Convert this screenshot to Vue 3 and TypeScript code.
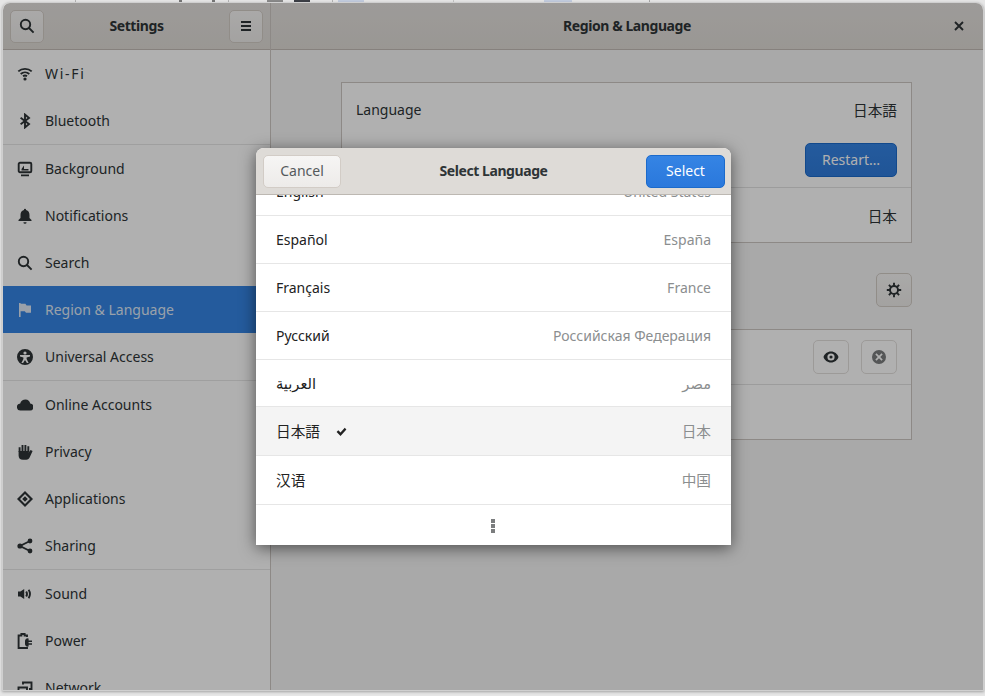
<script setup lang="ts">
interface NavItem {
  label: string;
  fill?: string;
  stroke?: string;
  sep?: boolean;
  active?: boolean;
}

interface LangRow {
  name: string;
  region: string;
  cls?: string;
  current?: boolean;
}

const navItems: NavItem[] = [
  {
    label: "Wi-Fi",
    fill: "M8 11.4a1.6 1.6 0 1 1 0 3.2 1.6 1.6 0 0 1 0-3.2z",
    stroke: "M1.3 5.4C5 2 11 2 14.7 5.4M3.7 7.9C6.2 5.8 9.8 5.8 12.3 7.9M6 10.2C7.2 9.4 8.8 9.4 10 10.2",
  },
  { label: "Bluetooth", stroke: "M3.6 4.8L12 11 8 14.4V1.6L12 5 3.6 11.2" },
  {
    label: "Background",
    sep: true,
    fill: "M4.5 8h7v1.500h-7zM4.500 8l2.500-3.500V8z",
    stroke: "M3 1.700h10a1.300 1.300 0 0 1 1.300 1.300v7a1.300 1.300 0 0 1-1.300 1.300H3A1.300 1.300 0 0 1 1.700 10V3A1.300 1.300 0 0 1 3 1.700zM4 14.400h8",
  },
  {
    label: "Notifications",
    fill: "M8 .8a1.1 1.1 0 0 1 1.1 1.1c2.4.5 3.4 2.5 3.4 5v3l2 2.2v.9h-13v-.9l2-2.2v-3c0-2.5 1-4.5 3.4-5A1.1 1.1 0 0 1 8 .8zM6.4 14.2h3.2a1.6 1.6 0 0 1-3.2 0z",
  },
  { label: "Search", stroke: "M11.2 6.5a4.7 4.7 0 1 1-9.4 0 4.7 4.7 0 0 1 9.4 0zM10 10l4.6 4.6" },
  {
    label: "Region & Language",
    active: true,
    fill: "M2 1h1.6v14H2zM3.6 1.8h4.8l1.2 1.6H14v7.4H9l-1.2-1.5H3.6z",
  },
  {
    label: "Universal Access",
    fill: "M8 0a8 8 0 1 0 0 16A8 8 0 0 0 8 0zM8 2.4a1.6 1.6 0 1 1 0 3.2 1.6 1.6 0 0 1 0-3.2zM3 6h10v1.5l-3.4 1V10l2 4H9.9L8 11l-1.9 3H4.4l2-4V8.5L3 7.5z",
  },
  {
    label: "Online Accounts",
    sep: true,
    fill: "M3.6 13.5a3.5 3.5 0 0 1-.4-7C3.8 4 6 2.5 8.5 2.5c2.6 0 4.4 1.8 4.7 4a3.5 3.5 0 0 1-.6 7z",
  },
  {
    label: "Privacy",
    fill: "M1.600 7h10v1.500L13.600 6l2 1-2.600 5.800c-.8 1.800-2 2.900-3.800 2.900H6c-2.800 0-4.400-1.700-4.400-4.300z",
    stroke: "M2.600 8V3.200M5.500 8V.9M8.400 8V.9M11.300 8V2.200",
  },
  {
    label: "Applications",
    fill: "M8 0l8 8-8 8-8-8zM8 3L3 8l5 5 5-5zM8 5.2L10.8 8 8 10.8 5.2 8z",
  },
  {
    label: "Sharing",
    fill: "M3 5.4a2.6 2.6 0 1 1 0 5.2 2.6 2.6 0 0 1 0-5.2zM13 .6a2.4 2.4 0 1 1 0 4.8 2.4 2.4 0 0 1 0-4.8zM13 10.6a2.4 2.4 0 1 1 0 4.8 2.4 2.4 0 0 1 0-4.8z",
    stroke: "M13 3L3 8l10 5",
  },
  {
    label: "Sound",
    sep: true,
    fill: "M1 5.5h2.4L7.2 3v10l-3.8-2.5H1z",
    stroke: "M9.2 5.4c1 1.6 1 3.6 0 5.2M11.6 3.8c1.7 2.6 1.7 5.8 0 8.4",
  },
  {
    label: "Power",
    fill: "M8 8a2.6 2.6 0 0 1 3-2.6h.6v2H15v1.5h-3.4v1.3H15v1.5h-3.4v1.9H11A2.6 2.6 0 0 1 8 11z",
    stroke: "M10 3.9V2.5H7.6V1H4.4v1.5H1.6V15H10v-1",
  },
  { label: "Network", stroke: "M1.5 7.5h8.5v6H1.5zM6 4.5V2.5h8.5v6.5H12" },
];

const langRows: LangRow[] = [
  { name: "English", region: "United States", cls: "first" },
  { name: "Español", region: "España" },
  { name: "Français", region: "France" },
  { name: "Русский", region: "Российская Федерация" },
  { name: "العربية", region: "مصر", cls: "short big" },
  { name: "日本語", region: "日本", cls: "tall big picked", current: true },
  { name: "汉语", region: "中国", cls: "tall big" },
];

// bits of the window behind, seen above the top edge
const behind = [
  { x: 75, w: 1, c: "#b4b4b4" },
  { x: 179, w: 3, c: "#777" },
  { x: 212, w: 3, c: "#777" },
  { x: 228, w: 1, c: "#b4b4b4" },
  { x: 267, w: 16, c: "#8a8a8a" },
  { x: 294, w: 16, c: "#3c3f46" },
  { x: 332, w: 1, c: "#b4b4b4" },
  { x: 338, w: 26, c: "#c3cddf" },
  { x: 453, w: 1, c: "#c4c4c4" },
  { x: 544, w: 28, c: "#c3cddf" },
  { x: 649, w: 1, c: "#a8a8a8" },
];
</script>

<template>
  <div class="desktop">
    <span
      v-for="m in behind"
      :key="m.x"
      class="mark"
      :style="{ left: m.x + 'px', width: m.w + 'px', background: m.c }"
    ></span>

    <div class="window">
      <aside class="sidebar">
        <header class="headerbar">
          <button class="btn icon-btn">
            <svg class="ico" viewBox="0 0 16 16"><path class="s" d="M11.2 6.5a4.7 4.7 0 1 1-9.4 0 4.7 4.7 0 0 1 9.4 0zM10 10l4.6 4.6" /></svg>
          </button>
          <span class="title">Settings</span>
          <button class="btn icon-btn">
            <svg class="ico" viewBox="0 0 16 16"><path class="f" d="M3 3h10v2H3zM3 7h10v2H3zM3 11h10v2H3z" /></svg>
          </button>
        </header>
        <nav class="nav">
          <div
            v-for="item in navItems"
            :key="item.label"
            class="nav-row"
            :class="{ sep: item.sep, active: item.active }"
          >
            <svg class="ico" viewBox="0 0 16 16">
              <path v-if="item.fill" class="f" :d="item.fill" />
              <path v-if="item.stroke" class="s" :d="item.stroke" />
            </svg>
            <span :class="{ wide: item.label === 'Wi-Fi' }">{{ item.label }}</span>
          </div>
        </nav>
      </aside>

      <section class="panel">
        <header class="headerbar center">
          <span class="title">Region &amp; Language</span>
          <svg class="close" viewBox="0 0 16 16"><path class="s" d="M4 4l8 8M12 4l-8 8" /></svg>
        </header>
        <div class="content">
          <div class="box">
            <div class="row between">
              <span class="lift">Language</span>
              <span class="cjk lift">日本語</span>
            </div>
            <div class="row-restart">
              <button class="btn restart">Restart…</button>
            </div>
            <div class="row end divided"><span class="cjk">日本</span></div>
          </div>

          <div class="gear-row">
            <button class="btn icon-btn tall-btn">
              <svg class="ico" viewBox="0 0 16 16">
                <path
                  class="s"
                  d="M12 8a4 4 0 1 1-8 0 4 4 0 0 1 8 0zM8 .8v2.7M8 12.5v2.7M.8 8h2.7M12.5 8h2.7M2.9 2.9l1.9 1.9M11.2 11.2l1.9 1.9M2.9 13.1l1.9-1.9M11.2 4.8l1.9-1.9"
                />
              </svg>
            </button>
          </div>

          <div class="box">
            <div class="row end gap">
              <button class="btn flat">
                <svg class="ico" viewBox="0 0 16 16">
                  <path class="f" fill-rule="evenodd" d="M8 2.5c-3.8 0-6.4 2.4-7.5 5.5 1.1 3.1 3.7 5.5 7.5 5.5s6.4-2.4 7.5-5.5C14.400 4.900 11.800 2.500 8 2.500zM8 4.400a3.600 3.600 0 1 1 0 7.200 3.600 3.600 0 0 1 0-7.200zM8 6.400a1.600 1.600 0 1 0 0 3.200 1.600 1.600 0 0 0 0-3.200z" />
                </svg>
              </button>
              <button class="btn flat">
                <svg class="ico grey" viewBox="0 0 16 16">
                  <path class="f" fill-rule="evenodd" d="M8 1a7 7 0 1 0 0 14A7 7 0 0 0 8 1zM5.500 4.300L8 6.800l2.500-2.500 1.200 1.200L9.200 8l2.500 2.500-1.200 1.200L8 9.200l-2.500 2.500-1.200-1.200L6.800 8 4.300 5.500z" />
                </svg>
              </button>
            </div>
            <div class="row divided"></div>
          </div>
        </div>
      </section>

      <div class="scrim"></div>

      <div class="dialog">
        <header class="dlg-head">
          <button class="btn dlg-btn">Cancel</button>
          <span class="title">Select Language</span>
          <button class="btn dlg-btn primary">Select</button>
        </header>
        <div class="lang-list">
          <div v-for="l in langRows" :key="l.name" class="lang-row" :class="l.cls">
            <span class="lang-name">{{ l.name }}</span>
            <svg v-if="l.current" class="check" viewBox="0 0 16 16"><path d="M2 8.500l2-2 2.800 2.800L12 3.500l2 2-7.200 8z" /></svg>
            <span class="lang-region">{{ l.region }}</span>
          </div>
          <div class="more">
            <svg class="ico grey" viewBox="0 0 16 16"><path class="f" d="M6 1h4v4H6zM6 6h4v4H6zM6 11h4v4H6z" /></svg>
          </div>
        </div>
      </div>
    </div>
  </div>
</template>

<style>
html,
body {
  background: #e6e6e6;
}
</style>

<style scoped>
.desktop {
  position: relative;
  width: 985px;
  height: 696px;
  overflow: hidden;
  padding: 2px 1px 0 2px;
  box-sizing: border-box;
  background: #e6e6e6;
  font-family: "Noto Sans", "Noto Sans CJK JP", "DejaVu Sans", sans-serif;
  font-size: 14px;
  color: #2e3436;
}

.mark {
  position: absolute;
  top: 0;
  height: 2px;
}

.window {
  position: relative;
  display: grid;
  grid-template-columns: 268px 1fr;
  height: 689px;
  box-sizing: border-box;
  border: 1px solid #cfcfcf;
  border-radius: 8px 8px 0 0;
  overflow: hidden;
  background: #f5f5f5;
  box-shadow: 0 1px 3px rgba(0, 0, 0, 0.3);
}

.sidebar {
  display: flex;
  flex-direction: column;
  min-height: 0;
  background: #fff;
  border-right: 1px solid #cdc7c2;
}

.panel {
  display: flex;
  flex-direction: column;
  min-width: 0;
}

.headerbar {
  flex: none;
  position: relative;
  display: flex;
  align-items: center;
  justify-content: space-between;
  height: 47px;
  box-sizing: border-box;
  padding: 0 7px;
  background: linear-gradient(#e4e1de, #dfdbd6);
  border-bottom: 1px solid #c3bcb5;
}

.headerbar.center {
  justify-content: center;
}

.title {
  padding-bottom: 2px;
  font-weight: 700;
  letter-spacing: -0.42px;
  color: #2e3436;
}

.close {
  position: absolute;
  right: 16px;
  top: 15px;
  width: 16px;
  height: 16px;
  color: #2e3436;
}

.ico {
  flex: none;
  width: 16px;
  height: 16px;
  color: #2e3436;
}

.ico.grey {
  color: #7b7d7e;
}

.f {
  fill: currentColor;
}

.s {
  fill: none;
  stroke: currentColor;
  stroke-width: 1.9;
}

.btn {
  display: inline-flex;
  align-items: center;
  justify-content: center;
  box-sizing: border-box;
  padding: 0 0 2px;
  font: inherit;
  color: #2e3436;
  border: 1px solid #d2ccc6;
  border-radius: 5px;
  background: linear-gradient(#f6f5f4, #edebe9);
}

.icon-btn {
  width: 34px;
  height: 33px;
  padding: 0;
}

.tall-btn {
  width: 36px;
  height: 34px;
}

.nav {
  flex: 1;
  min-height: 0;
  overflow: hidden;
}

.nav-row {
  display: flex;
  align-items: center;
  gap: 12px;
  height: 47px;
  padding-left: 14px;
  color: #2e3436;
}

.nav-row.sep {
  height: 48px;
  border-top: 1px solid #e6e6e6;
  box-sizing: border-box;
}

.nav-row.active {
  background: #3584e4;
  color: #dfe9f6;
}

.nav-row.active .ico {
  color: #dfe9f6;
}

.wide {
  letter-spacing: 1.7px;
}

.content {
  flex: 1;
  display: flex;
  flex-direction: column;
  padding: 32px 71px 0 70px;
}

.box {
  border: 1px solid #cdc7c2;
  background: #fff;
}

.row {
  display: flex;
  align-items: center;
  height: 54px;
  padding: 0 14px;
  box-sizing: border-box;
}

.row.divided {
  height: 55px;
  border-top: 1px solid #e2e2e2;
}

.between {
  justify-content: space-between;
}

.end {
  justify-content: flex-end;
}

.gap {
  gap: 12px;
}

.lift {
  padding-bottom: 2px;
}

.cjk {
  font-size: 14.67px;
}

.row-restart {
  display: flex;
  justify-content: flex-end;
  padding: 6px 14px 10px;
}

.restart {
  width: 92px;
  height: 34px;
  color: #fff;
  background: linear-gradient(#3584e4, #2f7bdb);
  border-color: #1b6acb;
}

.gear-row {
  display: flex;
  justify-content: flex-end;
  margin: 30px 0 22px;
}

.flat {
  width: 36px;
  height: 34px;
  padding: 0;
  background: #fff;
  border-color: #e3e0dd;
}

.scrim {
  position: absolute;
  inset: 0;
  background: rgba(0, 0, 0, 0.31);
}

.dialog {
  position: absolute;
  left: 253px;
  top: 145px;
  width: 475px;
  height: 397px;
  display: flex;
  flex-direction: column;
  border-radius: 8px 8px 0 0;
  overflow: hidden;
  background: #fff;
  box-shadow: 0 3px 16px rgba(0, 0, 0, 0.55);
}

.dlg-head {
  flex: none;
  display: flex;
  align-items: center;
  justify-content: space-between;
  height: 47px;
  box-sizing: border-box;
  padding: 0 6px 0 7px;
  background: #dedbd7;
  border-bottom: 1px solid #bdb8b2;
}

.dlg-btn {
  width: 78px;
  height: 33px;
  color: #555a5c;
}

.dlg-btn.primary {
  width: 79px;
  color: #fff;
  background: linear-gradient(#3584e4, #2a78dc);
  border-color: #1b6acb;
}

.lang-list {
  flex: 1;
  min-height: 0;
  overflow: hidden;
}

.lang-row {
  display: flex;
  align-items: center;
  height: 48px;
  box-sizing: border-box;
  padding: 0 20px;
  border-bottom: 1px solid #e6e6e6;
  color: #222;
}

.lang-row.first {
  margin-top: -27px;
}

.lang-row.short {
  height: 47px;
}

.lang-row.tall {
  height: 49px;
}

.lang-row.big {
  font-size: 14.67px;
}

.lang-row.big span {
  padding-bottom: 1px;
}

.lang-row.picked {
  background: #f4f4f4;
}

.check {
  width: 13px;
  height: 13px;
  margin-left: 15px;
  fill: #222;
}

.lang-region {
  margin-left: auto;
  color: #8b8e8f;
}

.more {
  display: flex;
  align-items: center;
  justify-content: center;
  height: 41px;
  padding-right: 1px;
  box-sizing: border-box;
}
</style>
